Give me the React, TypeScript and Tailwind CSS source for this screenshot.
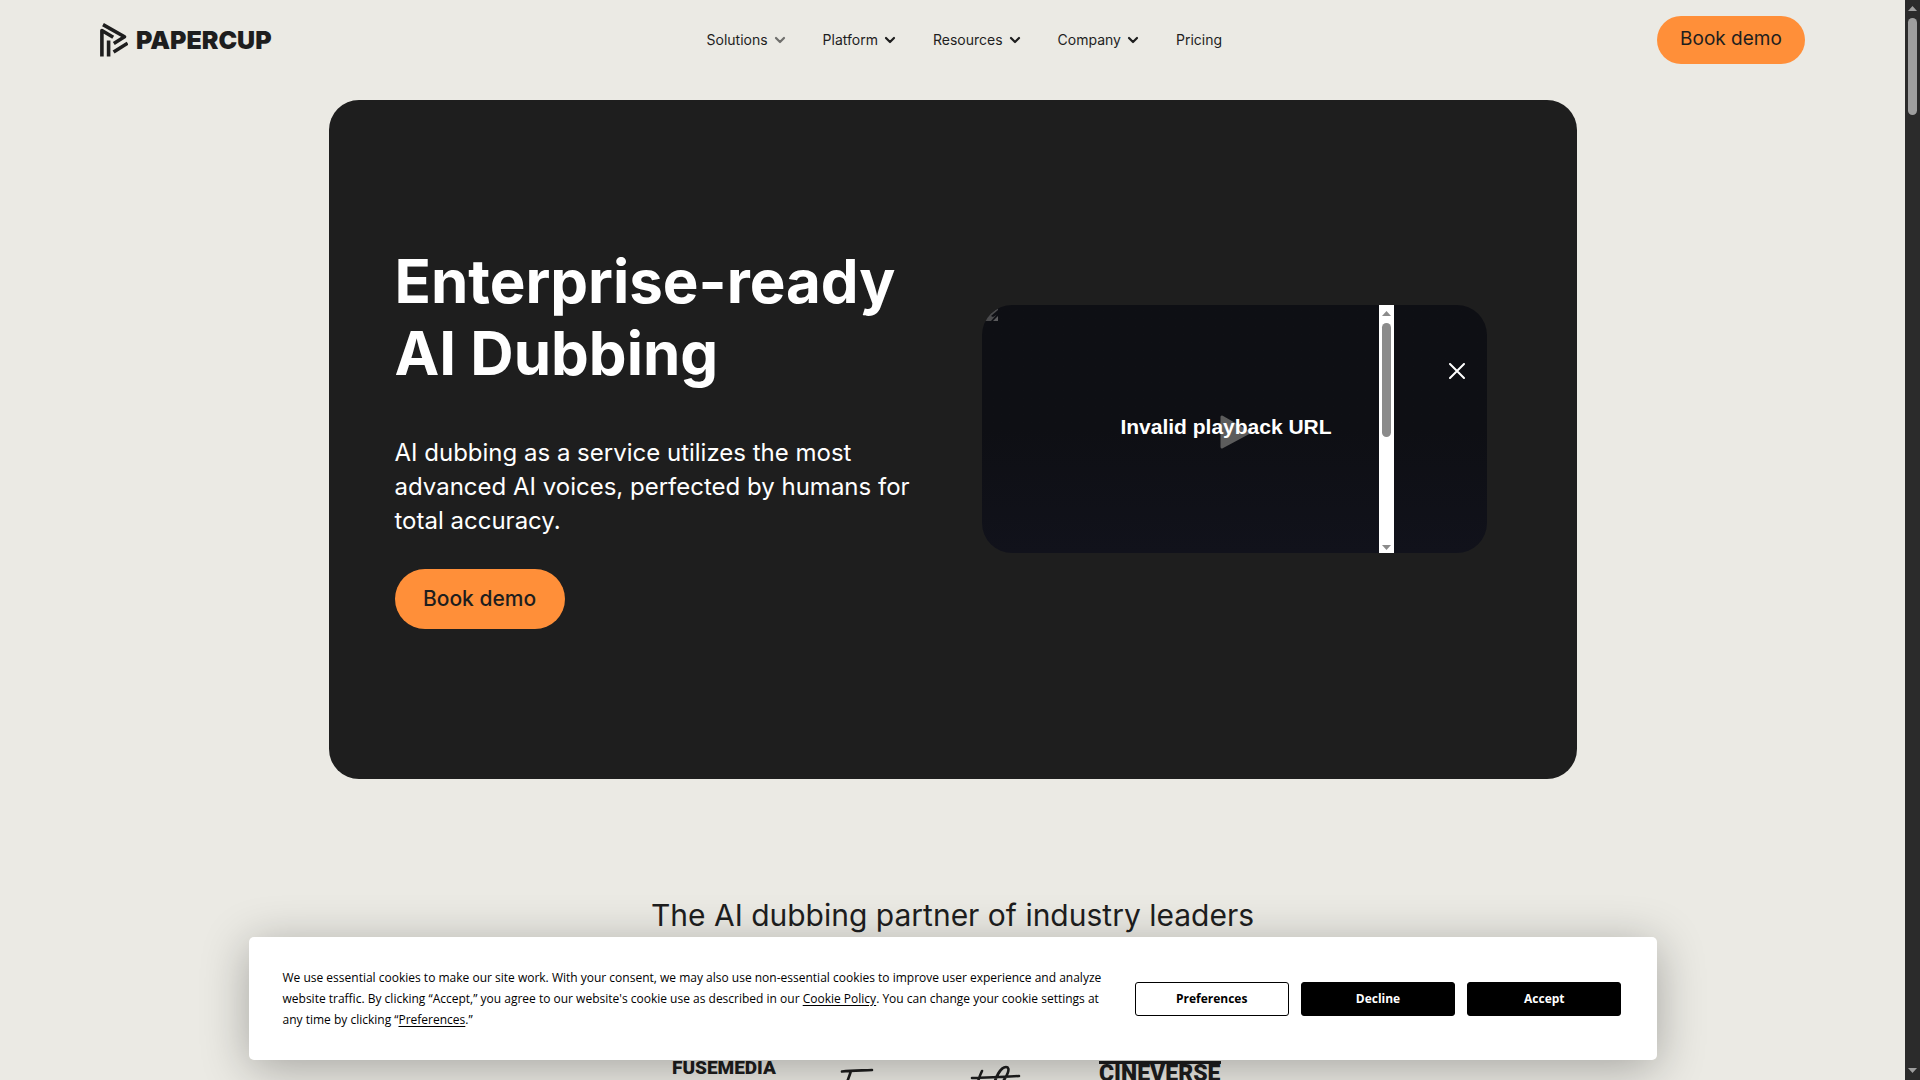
import type React from "react";

const navItems = [
  { label: "Solutions", menu: true, muted: true },
  { label: "Platform", menu: true },
  { label: "Resources", menu: true },
  { label: "Company", menu: true },
  { label: "Pricing" },
];

const Chevron = ({ className = "" }: { className?: string }) => (
  <svg viewBox="0 0 12 8" className={`w-3 h-2 ${className}`} aria-hidden="true">
    <path
      d="M2 2l4 4 4-4"
      fill="none"
      stroke="currentColor"
      strokeWidth="2.2"
      strokeLinecap="round"
      strokeLinejoin="round"
    />
  </svg>
);

const Logo = () => (
  <a href="#" className="flex items-center gap-2" aria-label="Papercup home">
    <svg
      viewBox="0 0 28 36"
      className="w-7 h-9"
      fill="none"
      stroke="currentColor"
      strokeWidth="3.6"
      aria-hidden="true"
    >
      <path d="M3 2.6l21.500 12.200-10.700 6.700" strokeLinejoin="round" />
      <path d="M13.600 30l14-8.800" />
      <path d="M1.900 34.500V8.500l11.300 6.800" strokeLinejoin="round" />
      <path d="M8.600 34.500V18.500" />
    </svg>
    <span className="text-[25px] leading-9 font-black">PAPERCUP</span>
  </a>
);

const ScrollBar = ({
  className = "",
  thumb,
}: {
  className?: string;
  thumb: string;
}) => (
  <div
    className={`w-[15px] shrink-0 flex flex-col items-center justify-between ${className}`}
    aria-hidden="true"
  >
    <div className="flex flex-col items-center gap-[7px] pt-[6px]">
      <svg viewBox="0 0 9 5" className="w-[9px] h-[5px]" fill="currentColor">
        <path d="M0 5L4.5 0 9 5z" />
      </svg>
      <div className={`w-[9px] rounded-full bg-current ${thumb}`} />
    </div>
    <svg viewBox="0 0 9 5" className="w-[9px] h-[5px] mb-[3px]" fill="currentColor">
      <path d="M0 0L4.5 5 9 0z" />
    </svg>
  </div>
);

const Header = () => (
  <header className="flex items-center justify-between h-20 px-[100px]">
    <Logo />
    <nav className="flex items-center gap-[37px] text-sm">
      {navItems.map(({ label, menu, muted }) =>
        menu ? (
          <button key={label} type="button" className="flex items-center gap-[6px]">
            {label}
            <Chevron className={muted ? "opacity-60" : ""} />
          </button>
        ) : (
          <a key={label} href="#">
            {label}
          </a>
        )
      )}
    </nav>
    <a
      href="#"
      className="w-[148px] h-12 pb-[2px] flex items-center justify-center rounded-full bg-[#ff8f39] text-[19px]"
    >
      Book demo
    </a>
  </header>
);

const Player = () => (
  <div className="relative w-[505px] h-[248px] mb-4 rounded-[30px] overflow-hidden bg-linear-to-b from-[#0e0f14] via-[#0e0f14] to-[#11121b] flex">
    {/* Missing poster thumbnail */}
    <svg
      viewBox="0 0 16 16"
      className="absolute left-0 top-0 w-4 h-4"
      aria-hidden="true"
    >
      <path d="M5 11L16 3v5l-7 8H0z" fill="#4a4a4c" />
      <path d="M9 11l7-6v4l-5 3z" fill="#0e0f14" />
      <path d="M11 16l5-5v5z" fill="#5a5a5c" />
    </svg>
    <div className="flex-1 relative flex items-center justify-center">
      <svg
        viewBox="0 0 31 34"
        className="absolute left-[238px] top-[110px] w-[31px] h-[34px]"
        aria-hidden="true"
      >
        <path
          d="M2 2v30L29 17.5z"
          fill="#5c5c5c"
          stroke="#5c5c5c"
          strokeWidth="3"
          strokeLinejoin="round"
        />
      </svg>
      <p className="relative pl-[92px] pb-1 text-[21px] leading-7 font-bold font-['Liberation_Sans',Arial,sans-serif]">
        Invalid playback URL
      </p>
    </div>
    <ScrollBar className="bg-white text-[#8b8b8b]" thumb="h-[114px]" />
    <div className="w-[93px] flex items-start justify-center pt-[58px] pl-[34px]">
      <button type="button" aria-label="Close">
        <svg viewBox="0 0 16 16" className="w-4 h-4" aria-hidden="true">
          <path
            d="M1 1l14 14M15 1L1 15"
            stroke="#fff"
            strokeWidth="2"
            strokeLinecap="round"
          />
        </svg>
      </button>
    </div>
  </div>
);

const Hero = () => (
  <section className="max-w-[1248px] mx-auto mt-5 pt-[145px] pb-[150px] pl-[66px] pr-[90px] rounded-[30px] bg-[#1e1e1e] text-white flex items-center justify-between">
    <div className="w-[530px]">
      <h1 className="text-[60px] leading-[72px] font-bold">
        Enterprise-ready
        <br />
        AI Dubbing
      </h1>
      <p className="mt-[47px] text-2xl leading-[34px]">
        AI dubbing as a service utilizes the most advanced AI voices, perfected
        by humans for total accuracy.
      </p>
      <a
        href="#"
        className="mt-[31px] flex items-center justify-center w-[170px] h-[60px] rounded-full bg-[#ff8f39] text-[21px] font-medium text-[#1e1e1e]"
      >
        Book demo
      </a>
    </div>
    <Player />
  </section>
);

const Partners = () => (
  <section className="mt-[118px]">
    <h2 className="text-center text-[30px] leading-9">
      The AI dubbing partner of industry leaders
    </h2>
    <div className="mt-32 flex justify-center items-start gap-[62px] pr-3 font-['Roboto',sans-serif]">
      <span className="w-[105px] text-[19px] leading-[14px] font-black">
        FUSEMEDIA
      </span>
      <svg
        viewBox="0 0 68 40"
        className="w-[68px] h-10"
        fill="none"
        stroke="currentColor"
        strokeWidth="2.6"
        strokeLinecap="round"
        aria-hidden="true"
      >
        <path d="M3 10.5c10-1 20-1 30-1.500M12 10c-2 6-4 12-7 18" />
      </svg>
      <svg
        viewBox="0 0 68 40"
        className="w-[68px] h-10"
        fill="none"
        stroke="currentColor"
        strokeWidth="2.6"
        strokeLinecap="round"
        aria-hidden="true"
      >
        <path d="M3 17c16-.5 32-1 47-2M13 10c-2 4-4 9-5 16M23 28c4-12 8-22 14-22 5 0 2 9-6 18" />
      </svg>
      <span className="w-[122px] pt-[2px] border-t-[3px] border-current text-[23px] leading-4 font-black">
        CINEVERSE
      </span>
    </div>
  </section>
);

const ConsentButton = ({
  children,
  className = "",
}: {
  children: React.ReactNode;
  className?: string;
}) => (
  <button
    type="button"
    className={`flex-1 h-[34px] rounded-[3px] border border-black text-xs font-bold ${className}`}
  >
    {children}
  </button>
);

const CookieBanner = () => (
  <div
    role="dialog"
    aria-label="Cookie consent"
    className="absolute inset-x-0 bottom-5 mx-auto max-w-[1408px] flex items-center gap-8 py-[30px] pl-[34px] pr-[35px] rounded-[5px] bg-white text-black shadow-[0_8px_48px_rgba(0,0,0,0.3)] font-['Open_Sans',sans-serif]"
  >
    <p className="flex-1 text-xs leading-[21px]">
      We use essential cookies to make our site work. With your consent, we may
      also use non-essential cookies to improve user experience and analyze
      website traffic. By clicking “Accept,” you agree to our website's cookie
      use as described in our{" "}
      <a href="#" className="underline underline-offset-2">
        Cookie Policy
      </a>
      . You can change your cookie settings at any time by clicking “
      <a href="#" className="underline underline-offset-2">
        Preferences
      </a>
      .”
    </p>
    <div className="w-[487px] flex gap-3">
      <ConsentButton className="bg-white">Preferences</ConsentButton>
      <ConsentButton className="bg-black text-white">Decline</ConsentButton>
      <ConsentButton className="bg-black text-white">Accept</ConsentButton>
    </div>
  </div>
);

export default function App() {
  return (
    <div className="flex h-screen overflow-hidden bg-[#ebeae4] text-[#1e1e1e] font-['Inter',sans-serif]">
      <div className="relative flex-1 overflow-hidden">
        <Header />
        <main>
          <Hero />
          <Partners />
        </main>
        <CookieBanner />
      </div>
      <ScrollBar className="pb-1 bg-[#2b2b2b] text-[#9f9f9f]" thumb="h-[97px]" />
    </div>
  );
}
